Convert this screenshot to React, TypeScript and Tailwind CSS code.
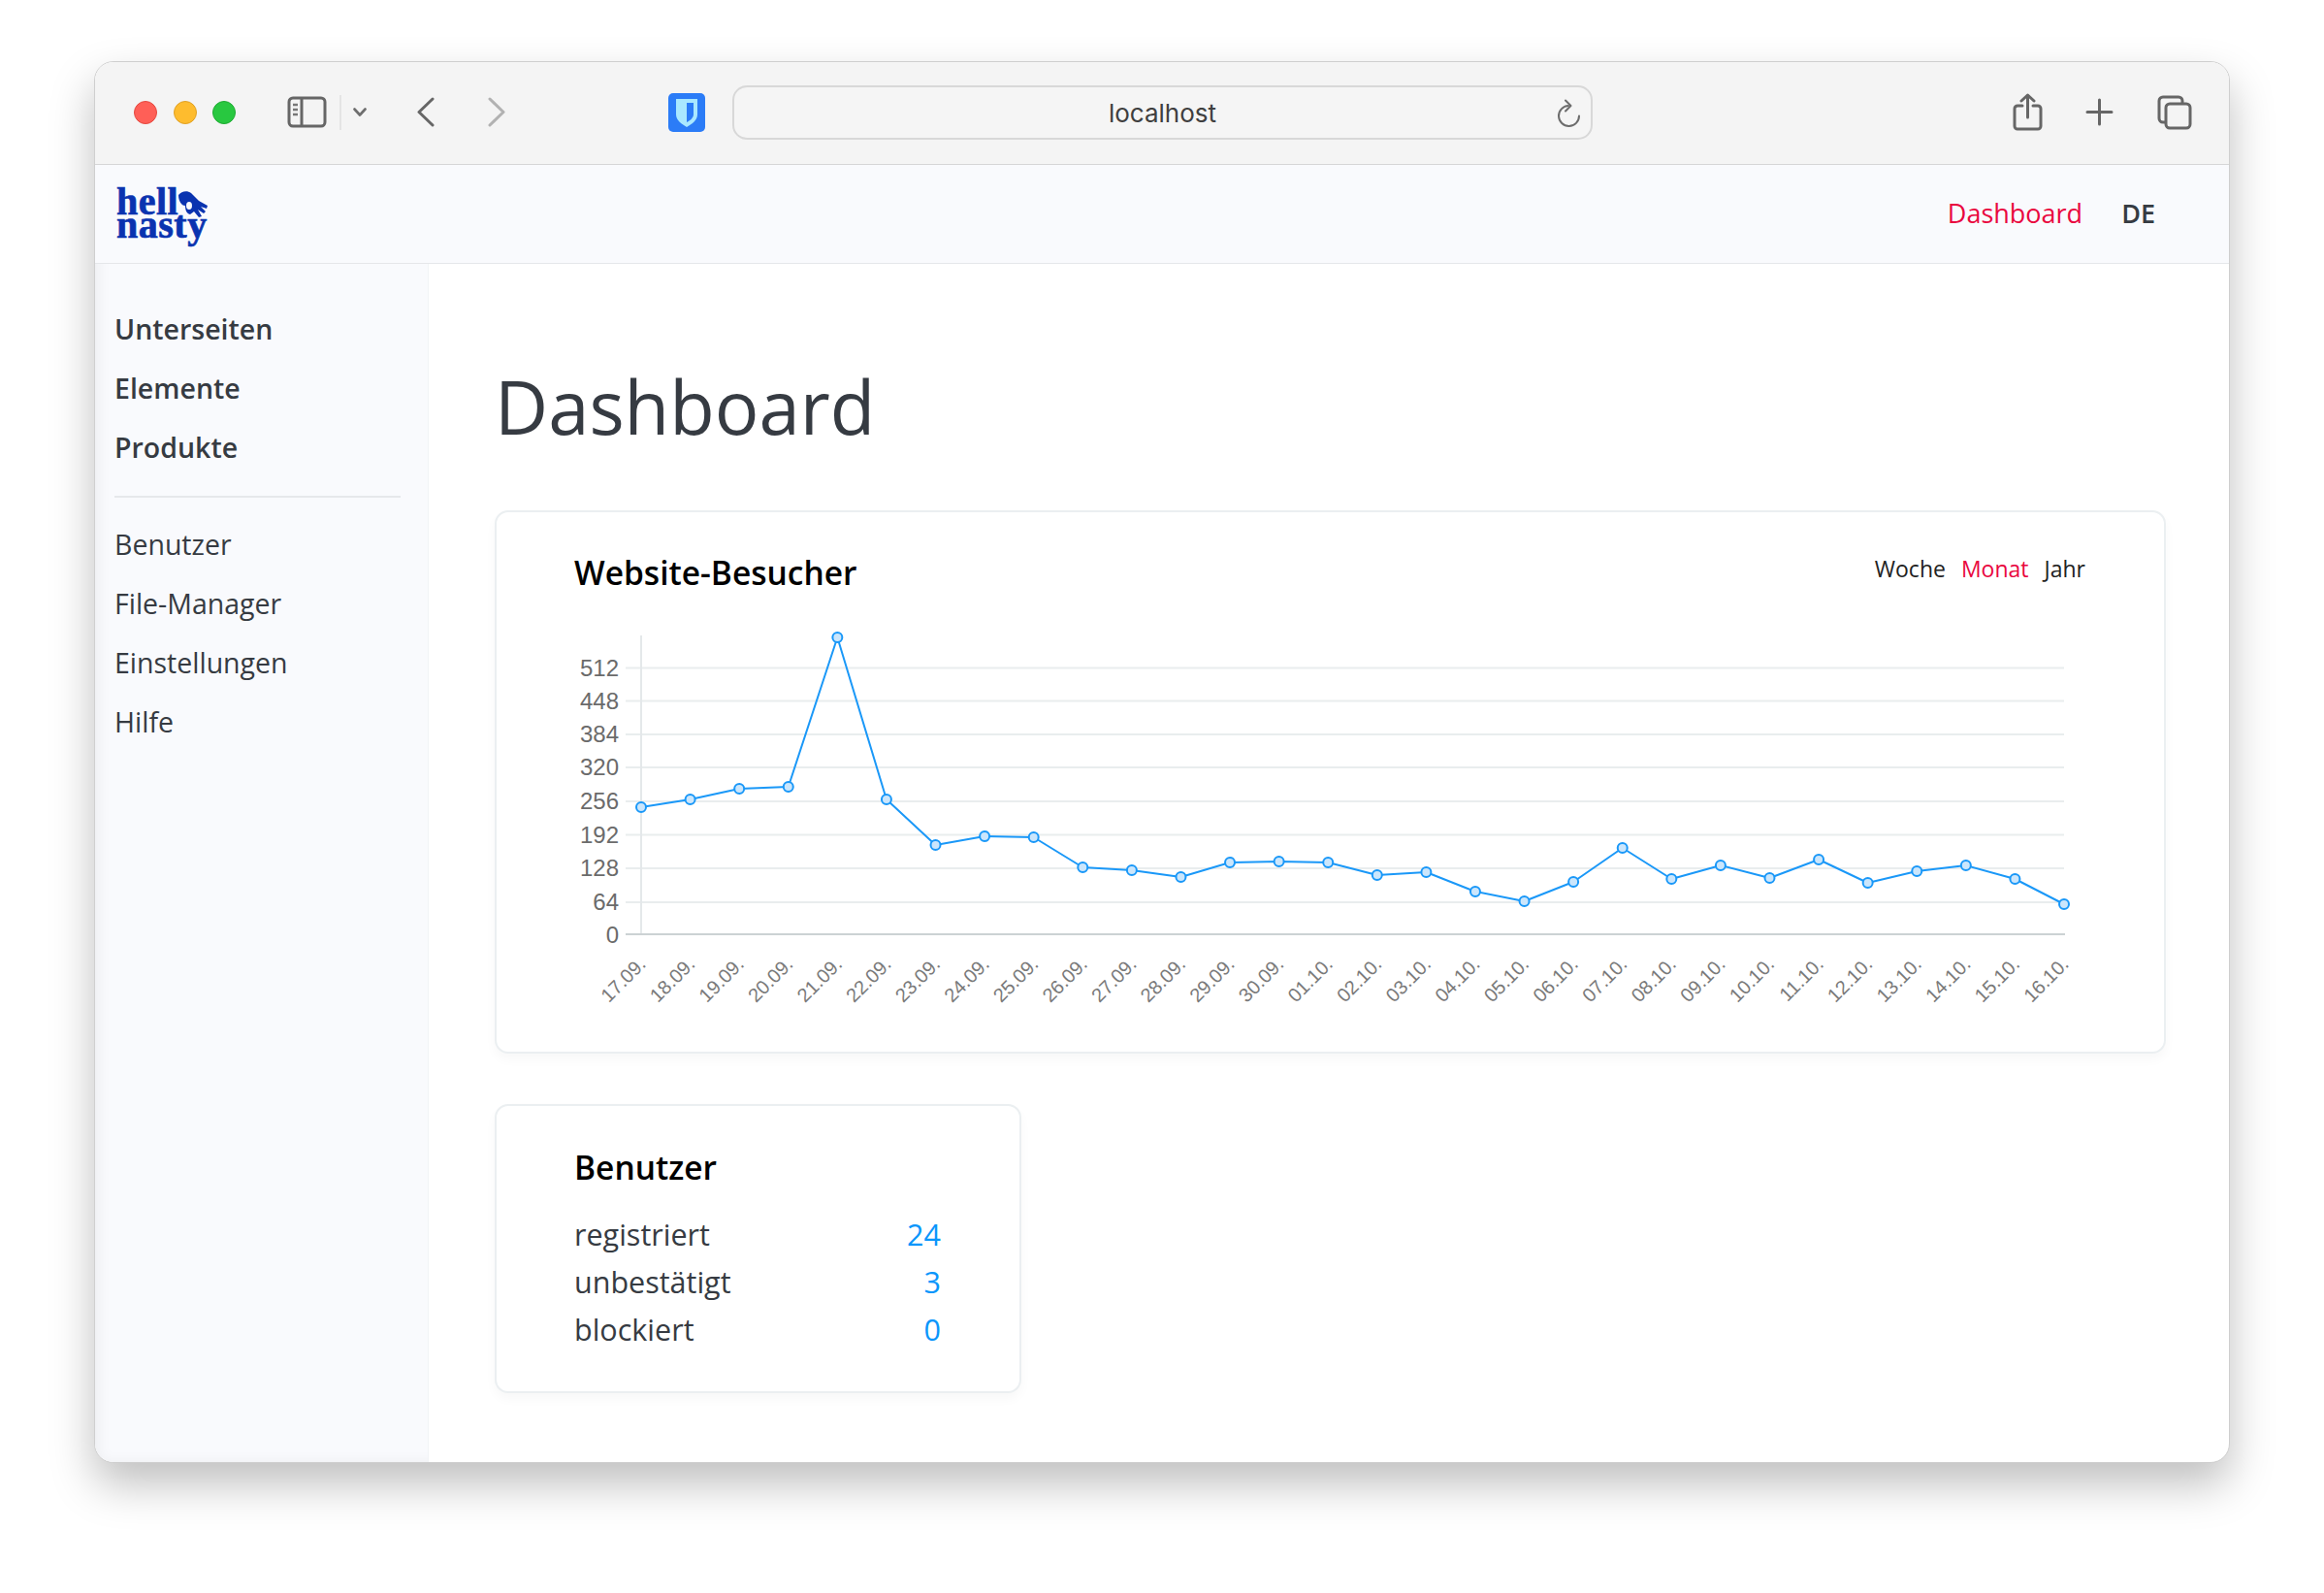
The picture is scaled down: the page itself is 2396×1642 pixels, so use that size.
import React from "react";

const openSans = "font-['Open_Sans',sans-serif]";

// Chart data, in page pixels taken from the screenshot
const pointYs = [
  831, 823, 812, 810, 656, 823, 870, 861, 862, 893, 896, 903, 888, 887, 888,
  901, 898, 918, 928, 908, 873, 905, 891, 904, 885, 909, 897, 891, 905, 931,
];
const gridYs = [687.5, 721.5, 756, 790, 825, 859.5, 894, 929];
const yLabels = ["512", "448", "384", "320", "256", "192", "128", "64"];
const xLabels = [
  "17.09.", "18.09.", "19.09.", "20.09.", "21.09.", "22.09.", "23.09.", "24.09.", "25.09.", "26.09.",
  "27.09.", "28.09.", "29.09.", "30.09.", "01.10.", "02.10.", "03.10.", "04.10.", "05.10.", "06.10.",
  "07.10.", "08.10.", "09.10.", "10.10.", "11.10.", "12.10.", "13.10.", "14.10.", "15.10.", "16.10.",
];
const axisX = 661;
const stepX = (2128 - 661) / 29;

const VisitorChart = () => {
  const points = pointYs.map((y, i) => `${axisX + i * stepX},${y}`).join(" ");
  return (
    <svg className="block" width="1719" height="420" viewBox="512 640 1719 420">
      <g fontFamily="'Liberation Sans', sans-serif" fill="#6b6b6b">
        {gridYs.map((y, i) => (
          <g key={y}>
            <line x1="645" x2="2128" y1={y} y2={y} stroke="#e9edee" strokeWidth="2" />
            <text x="638" y={y + 8} fontSize="24" textAnchor="end">{yLabels[i]}</text>
          </g>
        ))}
        <text x="638" y="971" fontSize="24" textAnchor="end">0</text>
        {xLabels.map((label, i) => {
          const x = axisX + i * stepX + 6;
          return (
            <text key={label} x={x} y="994" fontSize="20" fill="#7a7a7a" textAnchor="end" transform={`rotate(-45 ${x} 994)`}>
              {label}
            </text>
          );
        })}
      </g>
      <line x1={axisX} x2={axisX} y1="654" y2="962" stroke="#e4e8ea" strokeWidth="2" />
      <line x1="645" x2="2129" y1="962" y2="962" stroke="#ccd2d4" strokeWidth="2" />
      <polyline points={points} fill="none" stroke="#1a98f8" strokeWidth="2" strokeLinejoin="round" />
      {pointYs.map((y, i) => (
        <circle key={i} cx={axisX + i * stepX} cy={y} r="5" fill="#cbe6fc" stroke="#1a98f8" strokeWidth="2" />
      ))}
    </svg>
  );
};

const Logo = () => (
  <div className="relative w-[96px] h-[58px] pt-[4px] font-['Liberation_Serif',serif] font-bold text-[40px] leading-[24px] text-[#0a33b0] tracking-[0.5px] [-webkit-text-stroke:0.7px_#0a33b0]">
    <div>hell</div>
    <div>nasty</div>
    <svg className="absolute left-[64px] top-[5px]" width="31" height="28" viewBox="0 0 31 28" fill="#0a33b0">
      <path d="M0 4C3 0 9-1 13 2l8 8 9 5-1 3-6-2 5 5-2 2-6-4 4 7-3 1-5-6-4 3c-4-1-5-5-5-9C3 15 0 10 0 4z" />
      <ellipse cx="11" cy="15" rx="3" ry="4" fill="#f9fafd" />
    </svg>
  </div>
);

const Toolbar = () => (
  <div className="h-[106px] shrink-0 flex items-center pb-[2px] bg-[#f4f4f4] border-b border-[#d6d6d6]">
    {/* Traffic lights */}
    <div className="flex items-center gap-[16.5px] ml-[40px] mr-[53px]">
      <span className="w-[24px] h-[24px] rounded-full bg-[#ff5f57] border border-[#e5483f]" />
      <span className="w-[24px] h-[24px] rounded-full bg-[#febc2e] border border-[#e0a125]" />
      <span className="w-[24px] h-[24px] rounded-full bg-[#28c840] border border-[#1eaa32]" />
    </div>
    <svg width="41" height="33" viewBox="0 0 41 33" fill="none" stroke="#666" strokeWidth="3">
      <rect x="2" y="2" width="37" height="29" rx="4" />
      <path d="M15 2v29" />
      <path d="M6 9h5M6 14h5M6 19h5" strokeWidth="2.4" stroke="#777" />
    </svg>
    <div className="w-[2px] h-[36px] bg-[#e4e4e4] ml-[13px] mr-[12px]" />
    <svg width="14" height="10" viewBox="0 0 14 10" fill="none" stroke="#6e6e6e" strokeWidth="2.6" strokeLinecap="round" strokeLinejoin="round">
      <path d="M1.5 1.5 7 7.500l5.500-6" />
    </svg>
    <svg className="ml-[52px]" width="18" height="31" viewBox="0 0 18 31" fill="none" stroke="#666" strokeWidth="3" strokeLinecap="round" strokeLinejoin="round">
      <path d="M16 2 2 15.500 16 29" />
    </svg>
    <svg className="ml-[55px]" width="18" height="31" viewBox="0 0 18 31" fill="none" stroke="#b2b2b2" strokeWidth="3" strokeLinecap="round" strokeLinejoin="round">
      <path d="M2 2 16 15.500 2 29" />
    </svg>
    {/* Bitwarden */}
    <svg className="ml-[168px]" width="38" height="40" viewBox="0 0 38 40">
      <rect width="38" height="40" rx="5" fill="#2b7cf7" />
      <path d="M8 6h22v16c0 6-6 10-11 13C14 32 8 28 8 22z" fill="#a9e8ff" />
      <path d="M19 10h7v12c0 3-3 6-7 8z" fill="#2b7cf7" />
    </svg>
    {/* Address bar */}
    <div className="relative ml-[28px] w-[887px] h-[56px] flex items-center justify-center pt-[2px] rounded-[15px] border-2 border-[#d8d8d8] bg-[#f5f5f5] font-['Inter',sans-serif] text-[26px] text-[#3f3f3f]">
      localhost
      <svg className="absolute right-[10px] top-[12px]" width="26" height="30" viewBox="0 0 26 30" fill="none" stroke="#6c6c6c" strokeWidth="2" strokeLinecap="round" strokeLinejoin="round">
        <path d="M13 7a10.500 10.500 0 1 0 11 10.500" />
        <path d="M10 1.500 15.500 7 10 12.500" />
      </svg>
    </div>
    {/* Right actions */}
    <svg className="ml-[433px]" width="31" height="39" viewBox="0 0 31 39" fill="none" stroke="#666" strokeWidth="3" strokeLinecap="round" strokeLinejoin="round">
      <path d="M10 13H5a3 3 0 0 0-3 3v18a3 3 0 0 0 3 3h21a3 3 0 0 0 3-3V16a3 3 0 0 0-3-3h-5" />
      <path d="M15.500 25V2M9 8l6.500-6L22 8" />
    </svg>
    <svg className="ml-[44px]" width="29" height="29" viewBox="0 0 29 29" fill="none" stroke="#666" strokeWidth="3" strokeLinecap="round">
      <path d="M14.500 2v25M2 14.500h25" />
    </svg>
    <svg className="ml-[45px]" width="36" height="36" viewBox="0 0 36 36" fill="none" stroke="#666" strokeWidth="3">
      <path d="M8 28H6a4 4 0 0 1-4-4V6a4 4 0 0 1 4-4h16a4 4 0 0 1 4 4v2" />
      <rect x="9" y="9" width="25" height="25" rx="4" />
    </svg>
  </div>
);

const Sidebar = () => (
  <aside className="w-[344px] shrink-0 bg-[#f9fafd] border-r border-[#f1f4f6] pt-[37px] pl-[20px] pr-[28px] text-[28.5px] leading-[61px] text-[#363b42] shadow-[inset_14px_-10px_14px_-10px_rgba(0,0,0,0.05)]">
    <div className="font-semibold">
      <div>Unterseiten</div>
      <div>Elemente</div>
      <div>Produkte</div>
    </div>
    <div className="h-[2px] bg-[#e6e8eb] mt-[19px] mb-[18px]" />
    <div>
      <div>Benutzer</div>
      <div>File-Manager</div>
      <div>Einstellungen</div>
      <div>Hilfe</div>
    </div>
  </aside>
);

const Row = ({ label, value }: { label: string; value: number }) => (
  <div className="flex justify-between">
    <span>{label}</span>
    <span className="font-medium text-[#0a96fb]">{value}</span>
  </div>
);

const App = () => {
  return (
    <div className={`w-[2396px] h-[1642px] bg-white pt-[63px] pl-[97px] overflow-hidden ${openSans}`}>
      <div className="w-[2202px] h-[1445px] flex flex-col rounded-[20px] overflow-hidden border border-[#cfcfcf] bg-white shadow-[0_22px_45px_rgba(0,0,0,0.25)]">
        <Toolbar />

        {/* Top navigation */}
        <header className="h-[102px] shrink-0 flex items-center justify-between bg-[#f9fafd] border-b border-[#e5e7ea] pl-[22px] pr-[76px]">
          <Logo />
          <nav className="flex items-center gap-[40px] text-[27px] font-medium">
            <span className="text-[#e9073f]">Dashboard</span>
            <span className="font-semibold text-[#363b42]">DE</span>
          </nav>
        </header>

        <div className="flex flex-1 min-h-0">
          <Sidebar />

          <main className="flex-1 pl-[68px] pr-[70px] pt-[99px]">
            <h1 className="text-[76px] leading-[96px] text-[#363b42] mb-[59px]">Dashboard</h1>

            {/* Visitors card */}
            <section className="h-[560px] rounded-[14px] border-2 border-[#ebeff1] bg-white shadow-[0_6px_12px_rgba(0,0,0,0.03)] mb-[52px]">
              <div className="flex justify-between items-start pl-[80px] pr-[81px] pt-[38px] h-[113px]">
                <h2 className="text-[33.5px] leading-[48px] font-semibold text-black">Website-Besucher</h2>
                <div className="flex gap-[16px] text-[23px] leading-[40px] text-[#222]">
                  <span>Woche</span>
                  <span className="text-[#e9073f]">Monat</span>
                  <span>Jahr</span>
                </div>
              </div>
              <VisitorChart />
            </section>

            {/* Users card */}
            <section className="w-[543px] h-[298px] rounded-[14px] border-2 border-[#ebeff1] bg-white shadow-[0_6px_12px_rgba(0,0,0,0.03)] pl-[80px] pr-[81px] pt-[39px]">
              <h2 className="text-[33.5px] leading-[48px] font-semibold text-black mb-[21px]">Benutzer</h2>
              <div className="text-[30.5px] leading-[49px] text-[#363b42]">
                <Row label="registriert" value={24} />
                <Row label="unbestätigt" value={3} />
                <Row label="blockiert" value={0} />
              </div>
            </section>
          </main>
        </div>
      </div>
    </div>
  );
};

export default App;
